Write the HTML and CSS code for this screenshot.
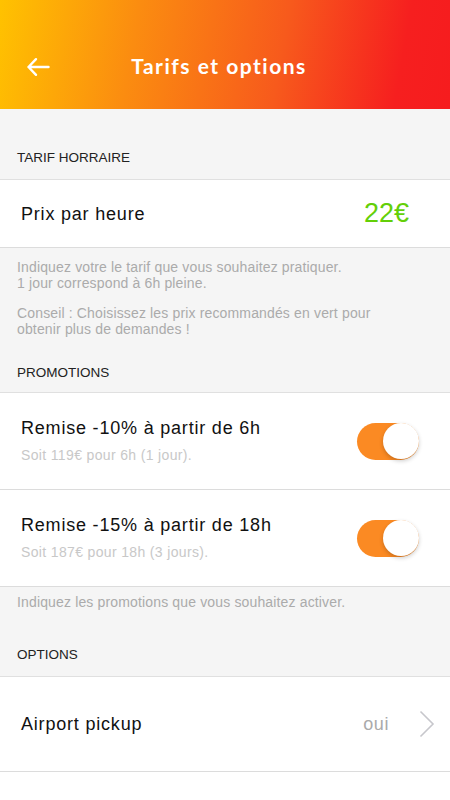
FILE: index.html
```html
<!DOCTYPE html>
<html lang="fr">
<head>
  <meta charset="UTF-8" />
  <meta name="viewport" content="width=device-width, initial-scale=1.0"/>
  <title>Tarifs et options</title>
  <link rel="stylesheet" href="styles.css">
</head>
<body>
  <header class="topbar">
    <span class="back">
      <svg width="24" height="20" viewBox="0 0 24 20" fill="none" stroke="#fff" stroke-width="2.4" stroke-linecap="round" stroke-linejoin="round">
        <path d="M22.5 10H2.5M10 2.2L2.5 10l7.5 7.8"/>
      </svg>
    </span>
    <h1>Tarifs et options</h1>
  </header>

  <div class="section-title section-tarif">TARIF HORRAIRE</div>
  <div class="card">
    <div class="row row-price">
      <span class="label">Prix par heure</span>
      <span class="price">22€</span>
    </div>
  </div>
  <div class="help">
    <p>Indiquez votre le tarif que vous souhaitez pratiquer.<br>1 jour correspond à 6h pleine.</p>
    <p>Conseil : Choisissez les prix recommandés en vert pour obtenir plus de demandes !</p>
  </div>

  <div class="section-title section-promo">PROMOTIONS</div>
  <div class="card">
    <div class="row row-promo">
      <div class="texts">
        <span class="label">Remise -10% à partir de 6h</span>
        <span class="sub">Soit 119€ pour 6h (1 jour).</span>
      </div>
      <span class="toggle on"><span class="knob"></span></span>
    </div>
    <div class="row row-promo">
      <div class="texts">
        <span class="label">Remise -15% à partir de 18h</span>
        <span class="sub">Soit 187€ pour 18h (3 jours).</span>
      </div>
      <span class="toggle on"><span class="knob"></span></span>
    </div>
  </div>
  <div class="help help-short">
    <p>Indiquez les promotions que vous souhaitez activer.</p>
  </div>

  <div class="section-title section-options">OPTIONS</div>
  <div class="card">
    <div class="row row-option">
      <span class="label">Airport pickup</span>
      <span class="value">oui</span>
      <svg class="chevron" width="16" height="28" viewBox="0 0 16 28" fill="none" stroke="#c7c7cc" stroke-width="1.6">
        <path d="M1.5 1.5l12.5 12.5L1.5 26.5"/>
      </svg>
    </div>
    <div class="row row-last"></div>
  </div>
</body>
</html>
```

FILE: styles.css
```css
body {
  margin: 0;
  background: #f5f5f5;
  font-family: "Liberation Sans", Arial, sans-serif;
  color: #111;
  width: 450px;
  height: 800px;
  overflow: hidden;
}

.topbar {
  height: 109px;
  background: linear-gradient(100deg, #ffc200 0%, #fb8c10 30%, #f75a1c 62%, #f61f1f 88%, #f61c1e 100%);
  position: relative;
  display: flex;
  align-items: center;
  justify-content: center;
  padding-top: 21px;
  box-sizing: border-box;
}

.back {
  position: absolute;
  left: 26px;
  top: 57px;
  display: flex;
}

.topbar h1 {
  margin: 0 0 0 -12px;
  color: #fff;
  font-family: Lato, sans-serif;
  font-size: 21px;
  font-weight: bold;
  letter-spacing: 1.5px;
}

.section-title {
  font-size: 13.5px;
  color: #222;
  line-height: 16px;
  padding: 0 17px;
}

.section-tarif {
  padding-top: 41px;
  padding-bottom: 13px;
}

.section-promo {
  padding-top: 28px;
  padding-bottom: 11px;
}

.section-options {
  padding-top: 37px;
  padding-bottom: 13px;
}

.card {
  background: #fff;
  border-top: 1px solid #e0e0e0;
}

.row {
  display: flex;
  align-items: center;
  border-bottom: 1px solid #dcdcdc;
  padding: 0 21px;
  box-sizing: border-box;
}

.label {
  font-size: 18px;
  letter-spacing: 0.8px;
  line-height: 22px;
  color: #111;
}

.row-price {
  height: 68px;
  justify-content: space-between;
}

.price {
  font-size: 27px;
  color: #63cf08;
  margin-right: 20px;
}

.help {
  padding: 11px 17px 0;
  color: #ababab;
  font-size: 14px;
  letter-spacing: 0.15px;
  line-height: 16px;
}

.help p {
  margin: 0 0 14px;
  max-width: 375px;
}

.help p:last-child {
  margin-bottom: 0;
}

.help-short {
  padding-top: 7px;
}

.row-promo {
  height: 97px;
  justify-content: space-between;
}

.texts {
  display: flex;
  flex-direction: column;
  padding-bottom: 2px;
}

.sub {
  font-size: 14px;
  letter-spacing: 0.35px;
  line-height: 16px;
  color: #c8c8c8;
  margin-top: 8px;
}

.toggle {
  width: 62px;
  height: 37px;
  border-radius: 19px;
  background: #fb8a23;
  position: relative;
  margin-right: 10px;
}

.knob {
  position: absolute;
  right: 0;
  top: 0.5px;
  width: 36px;
  height: 36px;
  border-radius: 50%;
  background: #fff;
  box-shadow: 0 2px 4px rgba(0, 0, 0, 0.2);
}

.row-option {
  height: 95px;
}

.row-option .label {
  flex: 1;
}

.value {
  font-size: 18px;
  letter-spacing: 0.6px;
  color: #aaa;
  margin-right: 30px;
}

.chevron {
  margin-right: -6px;
}

.row-last {
  height: 28px;
  border-bottom: none;
}
```
